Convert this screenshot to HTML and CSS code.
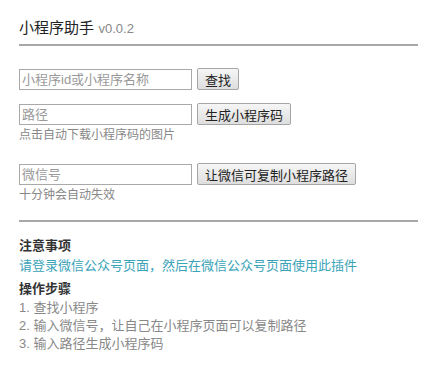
FILE: index.html
```html
<!DOCTYPE html>
<html>
    <head>
        <meta charset="utf-8">
        <link rel="stylesheet" href="styles.css">
    </head>
    <body>
        <div class="panel">
            <div class="header">
                <span class="title">小程序助手</span>
                <span class="version">v0.0.2</span>
            </div>

            <div class="form-row">
                <div class="line">
                    <input type="text" class="field" placeholder="小程序id或小程序名称">
                    <button class="btn">查找</button>
                </div>
            </div>

            <div class="form-row">
                <div class="line">
                    <input type="text" class="field" placeholder="路径">
                    <button class="btn">生成小程序码</button>
                </div>
                <div class="hint">点击自动下载小程序码的图片</div>
            </div>

            <div class="form-row gap">
                <div class="line">
                    <input type="text" class="field" placeholder="微信号">
                    <button class="btn">让微信可复制小程序路径</button>
                </div>
                <div class="hint">十分钟会自动失效</div>
            </div>

            <div class="notes">
                <h4>注意事项</h4>
                <p class="notice">请登录微信公众号页面，然后在微信公众号页面使用此插件</p>
                <h4>操作步骤</h4>
                <ol class="steps">
                    <li>1. 查找小程序</li>
                    <li>2. 输入微信号，让自己在小程序页面可以复制路径</li>
                    <li>3. 输入路径生成小程序码</li>
                </ol>
            </div>
        </div>
    </body>
</html>
```

FILE: styles.css
```css
body {
  margin: 0;
  font-family: "Liberation Sans", "Noto Sans CJK SC", sans-serif;
  color: #333;
  background: #fff;
}

.panel {
  padding: 18px 20px 0 19px;
}

/* title bar */
.header {
  padding-bottom: 6px;
  border-bottom: 2px solid #a8a8a8;
  line-height: 19px;
}

.title {
  font-size: 15px;
  color: #222;
}

.version {
  font-size: 13px;
  color: #888;
}

/* form rows */
.form-row {
  margin-top: 22px;
}

.form-row + .form-row {
  margin-top: 13px;
}

.form-row.gap {
  margin-top: 21px;
}

.line {
  display: flex;
  align-items: center;
  gap: 5px;
}

.field {
  width: 173px;
  height: 21px;
  box-sizing: border-box;
  margin: 0;
  padding: 0 2px;
  border: 1px solid #a9a9a9;
  font-family: inherit;
  font-size: 13px;
  color: #333;
}

.field::placeholder {
  color: #999;
}

.btn {
  height: 22px;
  margin: 0;
  padding: 0 7px;
  border: 1px solid #a6a6a6;
  border-radius: 2px;
  background: linear-gradient(#f6f6f6, #dedede);
  font-family: inherit;
  font-size: 13px;
  color: #222;
}

.hint {
  margin-top: 3px;
  font-size: 12px;
  line-height: 14px;
  color: #888;
}

/* notes */
.notes {
  margin-top: 18px;
  padding-top: 15px;
  border-top: 2px solid #a8a8a8;
}

.notes h4 {
  margin: 0;
  font-size: 13px;
  line-height: 18px;
  color: #333;
}

.notice {
  margin: 2px 0 5px;
  font-size: 13px;
  line-height: 18px;
  color: #3aa3b8;
}

.steps {
  margin: 1px 0 0;
  padding: 0;
  list-style: none;
  font-size: 13px;
  line-height: 18px;
  color: #888;
}
```
